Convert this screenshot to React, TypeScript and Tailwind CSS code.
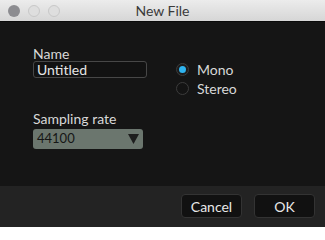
export default function App() {
  return (
    <div className="flex h-[227px] w-[325px] flex-col overflow-hidden bg-[#151515] font-['Lato','Open_Sans',sans-serif]">
      {/* title bar */}
      <div className="relative flex h-[22px] shrink-0 items-center justify-center border-b border-[#0a0a0a] bg-gradient-to-b from-[#ececec] to-[#d6d6d6]">
        <div className="absolute left-[8px] top-[5px] flex gap-[8px]">
          <span className="h-[12px] w-[12px] rounded-full bg-[#8c8c90]" />
          <span className="h-[12px] w-[12px] rounded-full border border-[#c8c8c8] bg-[#dedede]" />
          <span className="h-[12px] w-[12px] rounded-full border border-[#c8c8c8] bg-[#dedede]" />
        </div>
        <span className="text-[14px] text-[#3a3a3a]">New File</span>
      </div>

      {/* body */}
      <div className="flex flex-1 gap-[29px] pl-[33px] pt-[24px]">
        <div className="flex w-[114px] flex-col">
          <label className="text-[14px] leading-[15px] text-[#d8d8d8]">Name</label>
          <div className="flex h-[17px] items-center rounded-[3px] border border-[#474747] bg-[#121212] px-[3px] text-[14px] text-[#e6e6e6]">
            Untitled
          </div>
          <label className="mt-[33px] text-[14px] leading-[15px] text-[#d8d8d8]">Sampling rate</label>
          <div className="mt-[3px] flex h-[20px] w-[110px] items-center justify-between rounded-[3px] bg-[#6b766e] px-[4px] text-[13px] text-[#161616]">
            <span>44100</span>
            <svg width="11" height="10" viewBox="0 0 11 10">
              <path d="M0 0h11L5.5 10z" fill="#1e1e1e" />
            </svg>
          </div>
        </div>
        <div className="mt-[14px] flex flex-col">
          <div className="flex h-[19px] items-center gap-[8px]">
            <span className="flex h-[13px] w-[13px] items-center justify-center rounded-full border border-[#3c3c3c] bg-[#1c1c1c]">
              <span className="h-[7px] w-[7px] rounded-full bg-[#2fb4ef]" />
            </span>
            <span className="text-[14px] text-[#d8d8d8]">Mono</span>
          </div>
          <div className="flex h-[19px] items-center gap-[8px]">
            <span className="h-[13px] w-[13px] rounded-full border border-[#3c3c3c] bg-[#141414]" />
            <span className="text-[14px] text-[#d8d8d8]">Stereo</span>
          </div>
        </div>
      </div>

      {/* footer */}
      <div className="flex h-[41px] shrink-0 items-start justify-end gap-[12px] bg-[#232323] pr-[10px] pt-[8px]">
        <button className="h-[24px] w-[61px] rounded-[4px] border border-[#333] bg-[#111] text-[14px] text-[#e8e8e8]">
          Cancel
        </button>
        <button className="h-[24px] w-[61px] rounded-[4px] border border-[#333] bg-[#111] text-[14px] text-[#e8e8e8]">
          OK
        </button>
      </div>
    </div>
  )
}
